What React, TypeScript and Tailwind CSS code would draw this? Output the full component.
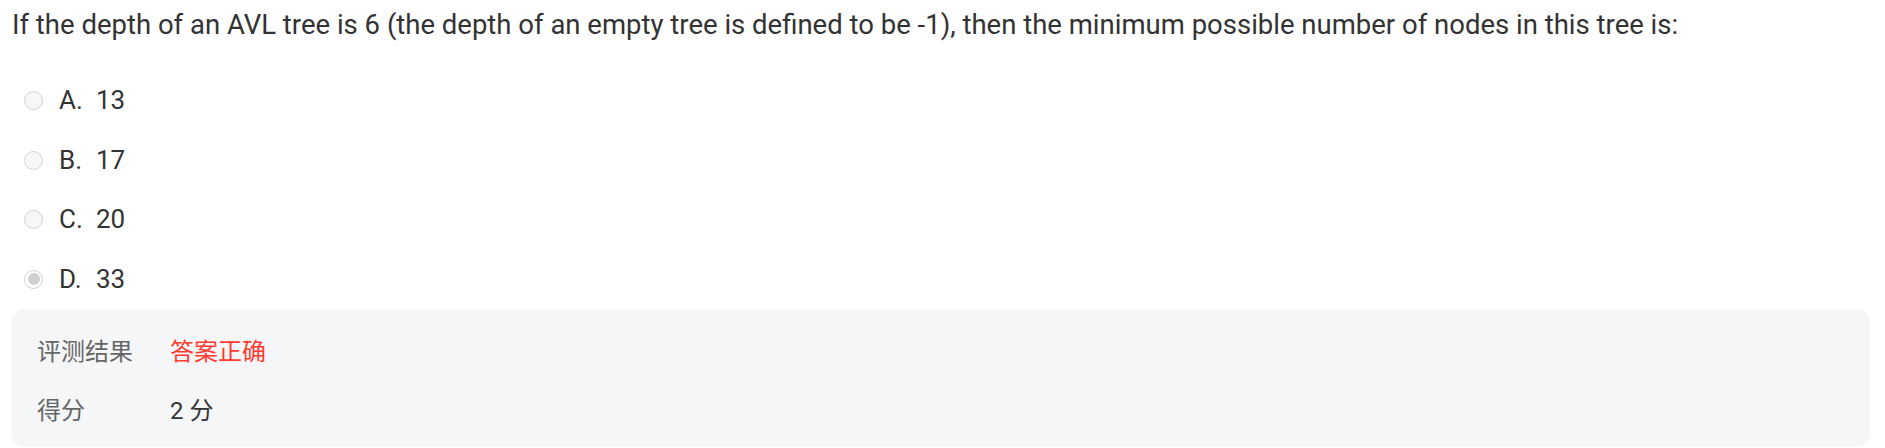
import React from 'react';

const options = [
    { key: 'A', text: '13', checked: false },
    { key: 'B', text: '17', checked: false },
    { key: 'C', text: '20', checked: false },
    { key: 'D', text: '33', checked: true },
];

export default function App() {
    return (
        <div className="w-[1885px] h-[448px] overflow-hidden bg-white font-['Roboto','Noto_Sans_CJK_SC',sans-serif]">
            <div className="pl-[12px] pt-[7px] text-[27.5px] leading-[36px] text-[#333]">
                If the depth of an AVL tree is 6 (the depth of an empty tree is defined to be -1), then the minimum possible number of nodes in this tree is:
            </div>
            <div className="flex flex-col pt-[28px] pl-[24px]">
                {options.map((o) => (
                    <div key={o.key} className="flex items-center h-[59.5px]">
                        <span
                            className={
                                o.checked
                                    ? 'w-[19px] h-[19px] rounded-full border border-[#d2d2d2] bg-white flex items-center justify-center'
                                    : 'w-[19px] h-[19px] rounded-full border border-[#d2d2d2] bg-[#f7f7f7]'
                            }
                        >
                            {o.checked && <span className="w-[12px] h-[12px] rounded-full bg-[#d0d0d0]" />}
                        </span>
                        <span className="ml-[16px] text-[26px] text-[#333] w-[37px]">{o.key}.</span>
                        <span className="text-[26px] text-[#333]">{o.text}</span>
                    </div>
                ))}
            </div>
            <div className="ml-[11px] mr-[15px] rounded-[14px] bg-[#f5f6f8] pt-[24px] pb-[17px] pl-[26px] text-[24px]">
                <div className="flex items-center h-[38px]">
                    <span className="w-[133px] text-[#666]">评测结果</span>
                    <span className="text-[#ff3b30]">答案正确</span>
                </div>
                <div className="flex items-center h-[38px] mt-[21px]">
                    <span className="w-[133px] text-[#666]">得分</span>
                    <span className="text-[#333]">2 分</span>
                </div>
            </div>
        </div>
    );
}
